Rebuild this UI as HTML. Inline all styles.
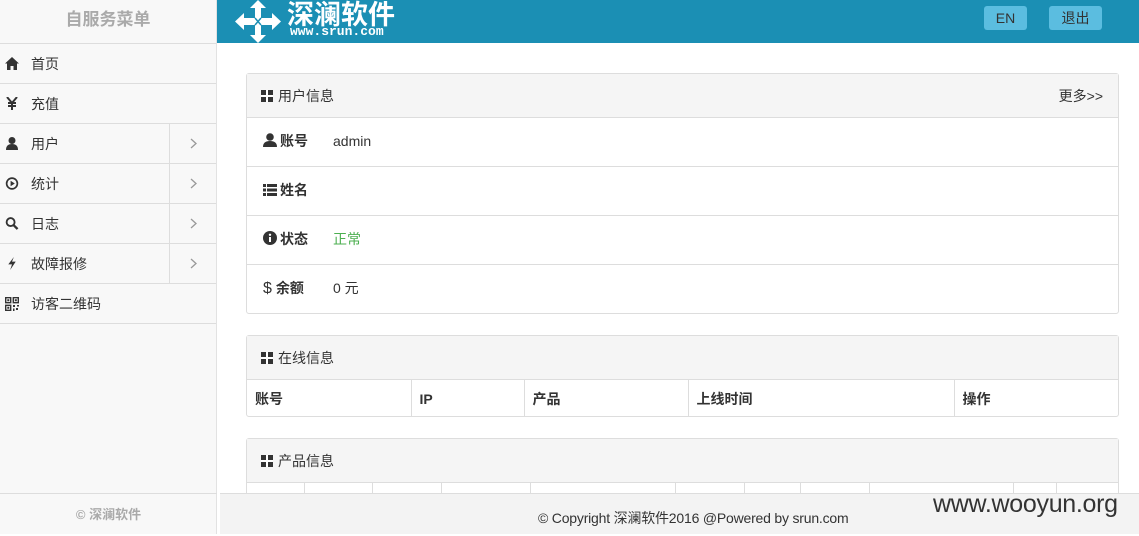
<!DOCTYPE html>
<html><head><meta charset="utf-8"><style>
*{margin:0;padding:0;box-sizing:border-box}
body{width:1139px;height:534px;overflow:hidden;font-family:"Liberation Sans","Noto Sans CJK SC",sans-serif;font-size:14px;color:#333;background:#fff;position:relative}
.side{position:absolute;left:0;top:0;width:217px;height:534px;background:#f8f8f8;border-right:1px solid #e2e2e2}
.side .t{height:44px;line-height:40px;text-align:center;font-size:17px;color:#aaa;font-weight:bold;border-bottom:1px solid #ddd}
.side .it{height:40px;line-height:40px;border-bottom:1px solid #ddd;position:relative;padding-left:31px;font-size:14px}
.side .it svg{position:absolute;left:5px;top:13px}
.side .it .ar{position:absolute;left:169px;top:0;width:48px;height:39px;border-left:1px solid #ddd}
.side .it .ar svg{left:20px;top:14px}
.sf{position:absolute;left:0;top:493px;width:217px;height:41px;border-top:1px solid #ddd;text-align:center;line-height:42px;color:#aaa;font-weight:bold;font-size:13px}
.hd{position:absolute;left:217px;top:0;width:922px;height:43px;background:#1b8fb4}
.btn{position:absolute;top:6px;height:24px;line-height:24px;background:#5bbde0;border-radius:3px;text-align:center;color:#333;font-size:14px}
.panel{position:absolute;left:246px;width:873px;border:1px solid #ddd;border-radius:3px;background:#fff}
.ph{height:44px;line-height:44px;background:#f5f5f5;border-bottom:1px solid #ddd;padding-left:14px;font-size:14px}
.grid{display:inline-block;width:12px;height:12px;vertical-align:-1px;margin-right:5px;background:linear-gradient(#fff,#fff) 5px 0/2px 12px no-repeat,linear-gradient(#fff,#fff) 0 5px/12px 2px no-repeat,#333}
.row{height:49px;line-height:46px;border-bottom:1px solid #ddd;padding-left:16px;position:relative}
.row b{display:inline-block;width:70px;font-weight:bold}
.row:last-child{border-bottom:none}
.row svg{vertical-align:-1px;margin-right:3px}
table{border-collapse:collapse;width:100%}
td{border-right:1px solid #ddd;height:37px;padding-left:8px;font-weight:bold}
.ft{position:absolute;left:220px;top:493px;width:919px;height:41px;background:#f3f3f3;border-top:1px solid #ddd}
</style></head><body>
<div class="side">
<div class="t">自服务菜单</div>
<div class="it"><svg width="14" height="13" viewBox="0 0 14 13"><path d="M7 0 L14 6.5 L12 6.5 L12 13 L8.5 13 L8.5 9 L5.5 9 L5.5 13 L2 13 L2 6.5 L0 6.5Z" fill="#333"/></svg>首页</div>
<div class="it"><svg width="14" height="13" viewBox="0 0 14 13"><path d="M2 0 L7 6 L12 0 M3 6 H11 M3 9 H11 M7 6 V13" stroke="#333" stroke-width="2" fill="none"/></svg>充值</div>
<div class="it"><svg width="14" height="13" viewBox="0 0 14 13"><circle cx="7" cy="3.5" r="3.5" fill="#333"/><path d="M1 13 Q1 7 7 7 Q13 7 13 13Z" fill="#333"/></svg>用户<span class="ar"><svg width="7" height="11"><path d="M1 1 L6 5.5 L1 10" stroke="#999" stroke-width="1.3" fill="none"/></svg></span></div>
<div class="it"><svg width="14" height="13" viewBox="0 0 14 14"><circle cx="7" cy="7" r="5.8" stroke="#333" stroke-width="1.8" fill="none"/><path d="M5.5 4 L10 7 L5.5 10Z" fill="#333"/></svg>统计<span class="ar"><svg width="7" height="11"><path d="M1 1 L6 5.5 L1 10" stroke="#999" stroke-width="1.3" fill="none"/></svg></span></div>
<div class="it"><svg width="14" height="13" viewBox="0 0 14 14"><circle cx="5.5" cy="5.5" r="4.3" stroke="#333" stroke-width="2" fill="none"/><path d="M8.5 8.5 L13 13" stroke="#333" stroke-width="2.5"/></svg>日志<span class="ar"><svg width="7" height="11"><path d="M1 1 L6 5.5 L1 10" stroke="#999" stroke-width="1.3" fill="none"/></svg></span></div>
<div class="it"><svg width="14" height="13" viewBox="0 0 14 14"><path d="M9 0 L3 8 L7 8 L5 14 L11 5 L7 5Z" fill="#333"/></svg>故障报修<span class="ar"><svg width="7" height="11"><path d="M1 1 L6 5.5 L1 10" stroke="#999" stroke-width="1.3" fill="none"/></svg></span></div>
<div class="it"><svg width="14" height="14" viewBox="0 0 14 14"><path d="M0.7 0.7h5v5h-5z M8.3 0.7h5v5h-5z M0.7 8.3h5v5h-5z" stroke="#333" stroke-width="1.4" fill="none"/><path d="M2.3 2.3h2v2h-2z M9.8 2.3h2v2h-2z M2.3 9.8h2v2h-2z M8 8h2v2H8z M11 11h2v2h-2z M8 11.5h1.5V14H8z M12 8h2v1.5h-2z" fill="#333"/></svg>访客二维码</div>
<div class="sf">© 深澜软件</div>
</div>
<div class="hd">
<svg style="position:absolute;left:18px;top:0" width="46" height="43" viewBox="0 0 46 43"><path d="M23 0 L31 8 L26 8 L26 18 L37 18 L37 13 L46 21.5 L37 30 L37 25 L26 25 L26 35 L31 35 L23 43 L15 35 L20 35 L20 25 L9 25 L9 30 L0 21.5 L9 13 L9 18 L20 18 L20 8 L15 8 Z" fill="#fff"/><path d="M20 18 L26 25 M26 18 L20 25" stroke="#1b8fb4" stroke-width="1.5"/></svg>
<div style="position:absolute;left:70px;top:0px;color:#fff;font-size:27px;line-height:30px;font-weight:bold;letter-spacing:0px">深澜软件</div>
<div style="position:absolute;left:73px;top:26px;color:#fff;font-family:'Liberation Mono',monospace;font-size:13px;line-height:12px;font-weight:bold">www.srun.com</div>
<div class="btn" style="left:767px;width:43px">EN</div>
<div class="btn" style="left:832px;width:53px">退出</div>
</div>
<div class="panel" style="top:73px;height:241px">
<div class="ph"><span class="grid"></span>用户信息<span style="position:absolute;right:15px">更多&gt;&gt;</span></div>
<div class="row"><b><svg width="14" height="14" viewBox="0 0 14 14"><circle cx="7" cy="4" r="3.8" fill="#333"/><path d="M0 14 Q0 8 7 8 Q14 8 14 14Z" fill="#333"/></svg>账号</b>admin</div>
<div class="row"><b><svg width="14" height="12" viewBox="0 0 14 12"><path d="M0 0h3v3H0zM4 0h10v3H4zM0 4.5h3v3H0zM4 4.5h10v3H4zM0 9h3v3H0zM4 9h10v3H4z" fill="#333"/></svg>姓名</b></div>
<div class="row"><b><svg width="14" height="14" viewBox="0 0 14 14"><circle cx="7" cy="7" r="7" fill="#333"/><rect x="6" y="6" width="2" height="5" fill="#fff"/><circle cx="7" cy="3.8" r="1.2" fill="#fff"/></svg>状态</b><span style="color:#4caf50">正常</span></div>
<div class="row"><b><span style="font-size:16px;font-weight:normal;margin-right:4px">$</span>余额</b>0 元</div>
</div>
<div class="panel" style="top:335px;height:82px">
<div class="ph"><span class="grid"></span>在线信息</div>
<table><tr><td style="width:164px">账号</td><td style="width:113px">IP</td><td style="width:164px">产品</td><td style="width:266px">上线时间</td><td style="border:none">操作</td></tr></table>
</div>
<div class="panel" style="top:438px;height:70px">
<div class="ph"><span class="grid"></span>产品信息</div>
<table><tr><td style="width:57px"></td><td style="width:68px"></td><td style="width:69px"></td><td style="width:89px"></td><td style="width:145px"></td><td style="width:69px"></td><td style="width:56px"></td><td style="width:69px"></td><td style="width:144px"></td><td style="width:43px"></td><td style="border:none"></td></tr></table>
</div>
<div class="ft"><div style="position:absolute;left:318px;top:14px;font-size:14px;color:#333;letter-spacing:-0.2px">© Copyright 深澜软件2016 @Powered by srun.com</div></div>
<div style="position:absolute;left:933px;top:490px;font-size:25px;color:#333;letter-spacing:-0.3px">www.wooyun.org</div>
</body></html>
